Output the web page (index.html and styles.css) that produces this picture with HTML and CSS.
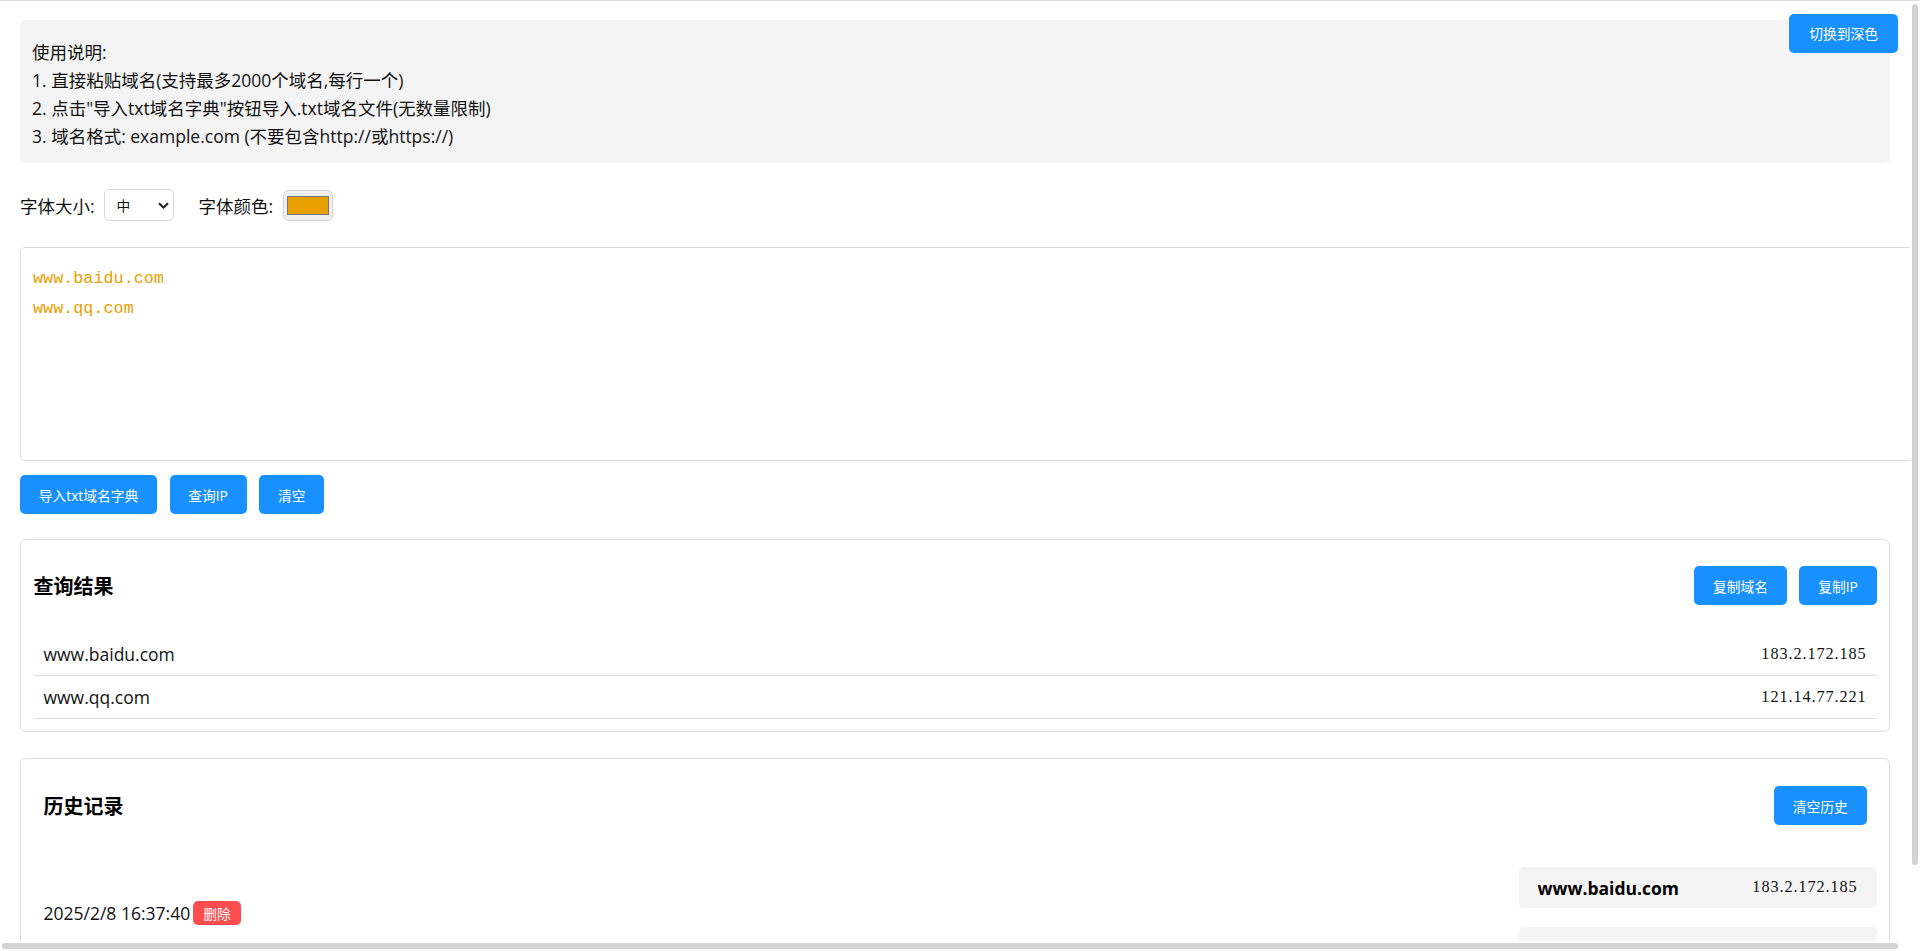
FILE: index.html
```html
<!DOCTYPE html>
<html lang="zh-CN">
<head>
<meta charset="utf-8">
<title>域名IP批量查询</title>
<link rel="stylesheet" href="styles.css">
</head>
<body>
<button class="btn theme-btn">切换到深色</button>
<main class="page">
  <section class="guide">
    使用说明:<br>
    1. 直接粘贴域名(支持最多2000个域名,每行一个)<br>
    2. 点击"导入txt域名字典"按钮导入.txt域名文件(无数量限制)<br>
    3. 域名格式: example.com (不要包含http://或https://)
  </section>

  <div class="controls">
    <label class="ctl-label">字体大小:</label>
    <div class="select-wrap">
      <select class="size-select"><option>中</option><option>小</option><option>大</option></select>
      <svg class="chev" viewBox="0 0 11 7" width="11" height="7"><path d="M1 1.2 L5.5 5.6 L10 1.2" fill="none" stroke="#1f1f1f" stroke-width="2"/></svg>
    </div>
    <label class="ctl-label">字体颜色:</label>
    <div class="color-input"><span class="swatch"></span></div>
  </div>

  <textarea class="domains" spellcheck="false">www.baidu.com
www.qq.com</textarea>

  <div class="actions">
    <button class="btn">导入txt域名字典</button>
    <button class="btn">查询IP</button>
    <button class="btn">清空</button>
  </div>

  <section class="card results">
    <div class="card-head">
      <h3>查询结果</h3>
      <div class="head-btns">
        <button class="btn">复制域名</button>
        <button class="btn">复制IP</button>
      </div>
    </div>
    <ul class="result-list">
      <li><span class="domain">www.baidu.com</span><span class="ip">183.2.172.185</span></li>
      <li><span class="domain">www.qq.com</span><span class="ip">121.14.77.221</span></li>
    </ul>
  </section>

  <section class="card history">
    <div class="card-head">
      <h3>历史记录</h3>
      <button class="btn">清空历史</button>
    </div>
    <div class="hist-item">
      <div class="hist-time"><span>2025/2/8 16:37:40</span><button class="del">删除</button></div>
      <div class="hist-results">
        <div class="hist-row"><span class="domain">www.baidu.com</span><span class="ip">183.2.172.185</span></div>
        <div class="hist-row"><span class="domain">www.qq.com</span><span class="ip">121.14.77.221</span></div>
      </div>
    </div>
  </section>
</main>
<div class="vscroll"><div class="thumb"></div></div>
<div class="hscroll"><div class="thumb"></div></div>
</body>
</html>
```

FILE: styles.css
```css
* { box-sizing: border-box; }

html { overflow: hidden; }

body {
  margin: 0;
  border-top: 1px solid #dedede;
  background: #fff;
  color: #111;
  font-family: "Open Sans", "Noto Sans CJK SC", sans-serif;
  font-size: 17.5px;
}

.page {
  width: 1910px;
  padding: 19px 20px 0;
}

.guide {
  background: #f4f4f4;
  border-radius: 5px;
  padding: 18px 12px 13px;
  line-height: 28px;
}

.controls {
  display: flex;
  align-items: center;
  height: 32px;
  margin-top: 26px;
}

.ctl-label { white-space: nowrap; }

.select-wrap {
  position: relative;
  width: 70px;
  height: 32px;
  margin: 0 25px 0 9px;
}

.size-select {
  -webkit-appearance: none;
  appearance: none;
  width: 100%;
  height: 100%;
  border: 1px solid #d6d6d6;
  border-radius: 5px;
  background: #fff;
  padding: 0 0 0 12px;
  font-family: "Noto Sans CJK SC", sans-serif;
  font-size: 13.75px;
  color: #111;
  outline: none;
}

.chev {
  position: absolute;
  left: 54px;
  top: 13px;
  pointer-events: none;
}

.color-input {
  width: 50px;
  height: 31px;
  margin-left: 10px;
  border: 1px solid #d4d4d4;
  border-radius: 5px;
  background: #efefef;
  padding: 5px 3px;
}

.swatch {
  display: block;
  width: 100%;
  height: 100%;
  background: #e8a000;
  border: 1px solid #767676;
}

.domains {
  display: block;
  width: 1897px;
  height: 214px;
  margin-top: 26px;
  border: 1px solid #d9d9d9;
  border-radius: 5px;
  padding: 16px 12px 12px;
  font-family: "Liberation Mono", monospace;
  font-size: 16.8px;
  line-height: 30px;
  color: #e8a000;
  resize: none;
  outline: none;
  overflow: hidden;
}

.actions {
  display: flex;
  gap: 12.5px;
  margin-top: 14px;
}

.btn {
  height: 39px;
  padding: 0 18.75px;
  border: 0;
  border-radius: 5px;
  background: #1890ff;
  color: #fff;
  font-family: "Open Sans", "Noto Sans CJK SC", sans-serif;
  font-size: 13.75px;
  white-space: nowrap;
  cursor: pointer;
}

.theme-btn {
  position: fixed;
  top: 13.5px;
  right: 22px;
  padding: 0 20px;
  z-index: 5;
}

.card {
  border: 1px solid #dedede;
  border-radius: 6px;
}

.card-head {
  display: flex;
  justify-content: space-between;
  align-items: center;
}

.card-head h3 {
  margin: 0;
  font-size: 20px;
  font-weight: 700;
  color: #000;
}

.head-btns {
  display: flex;
  gap: 12.5px;
}

.results {
  margin-top: 25px;
  padding: 0 12.5px 12px;
}

.results .card-head {
  padding-top: 26px;
  margin-bottom: 28px;
}

.result-list {
  list-style: none;
  margin: 0;
  padding: 0;
}

.result-list li {
  display: flex;
  justify-content: space-between;
  align-items: center;
  height: 43px;
  padding: 0 10px;
  border-bottom: 1px solid #dedede;
}

.ip {
  font-family: "Liberation Serif", serif;
  font-size: 16.25px;
  letter-spacing: 0.9px;
  color: #111;
}

.history {
  margin-top: 26px;
  padding: 12.5px;
}

.history .card-head {
  padding: 14.5px 10px 0;
}

.hist-item {
  display: flex;
  justify-content: space-between;
  align-items: center;
  margin-top: 42px;
  padding-left: 10px;
}

.hist-time {
  display: flex;
  align-items: center;
  gap: 3px;
  margin-bottom: 9px;
}

.del {
  height: 24px;
  padding: 0 10px;
  border: 0;
  border-radius: 5px;
  background: #ff4d4f;
  color: #fff;
  font-family: "Open Sans", "Noto Sans CJK SC", sans-serif;
  font-size: 13.75px;
}

.hist-results {
  display: flex;
  flex-direction: column;
  gap: 19px;
}

.hist-row {
  width: 358px;
  height: 41px;
  padding: 0 19px;
  background: #f4f4f4;
  border-radius: 5px;
  display: flex;
  justify-content: space-between;
  align-items: center;
}

.hist-row .domain {
  font-weight: 700;
  color: #000;
}

.vscroll {
  position: fixed;
  top: 1px;
  right: 0;
  width: 10px;
  height: 940px;
  background: #fff;
  z-index: 10;
}

.vscroll .thumb {
  position: absolute;
  left: 2px;
  top: 3px;
  width: 6px;
  height: 861px;
  border-radius: 3px;
  background: #d3d3d3;
}

.hscroll {
  position: fixed;
  left: 0;
  bottom: 0;
  width: 1920px;
  height: 10px;
  background: #fff;
  z-index: 10;
}

.hscroll .thumb {
  position: absolute;
  left: 2px;
  top: 2px;
  width: 1896px;
  height: 6px;
  border-radius: 3px;
  background: #d3d3d3;
}
```
